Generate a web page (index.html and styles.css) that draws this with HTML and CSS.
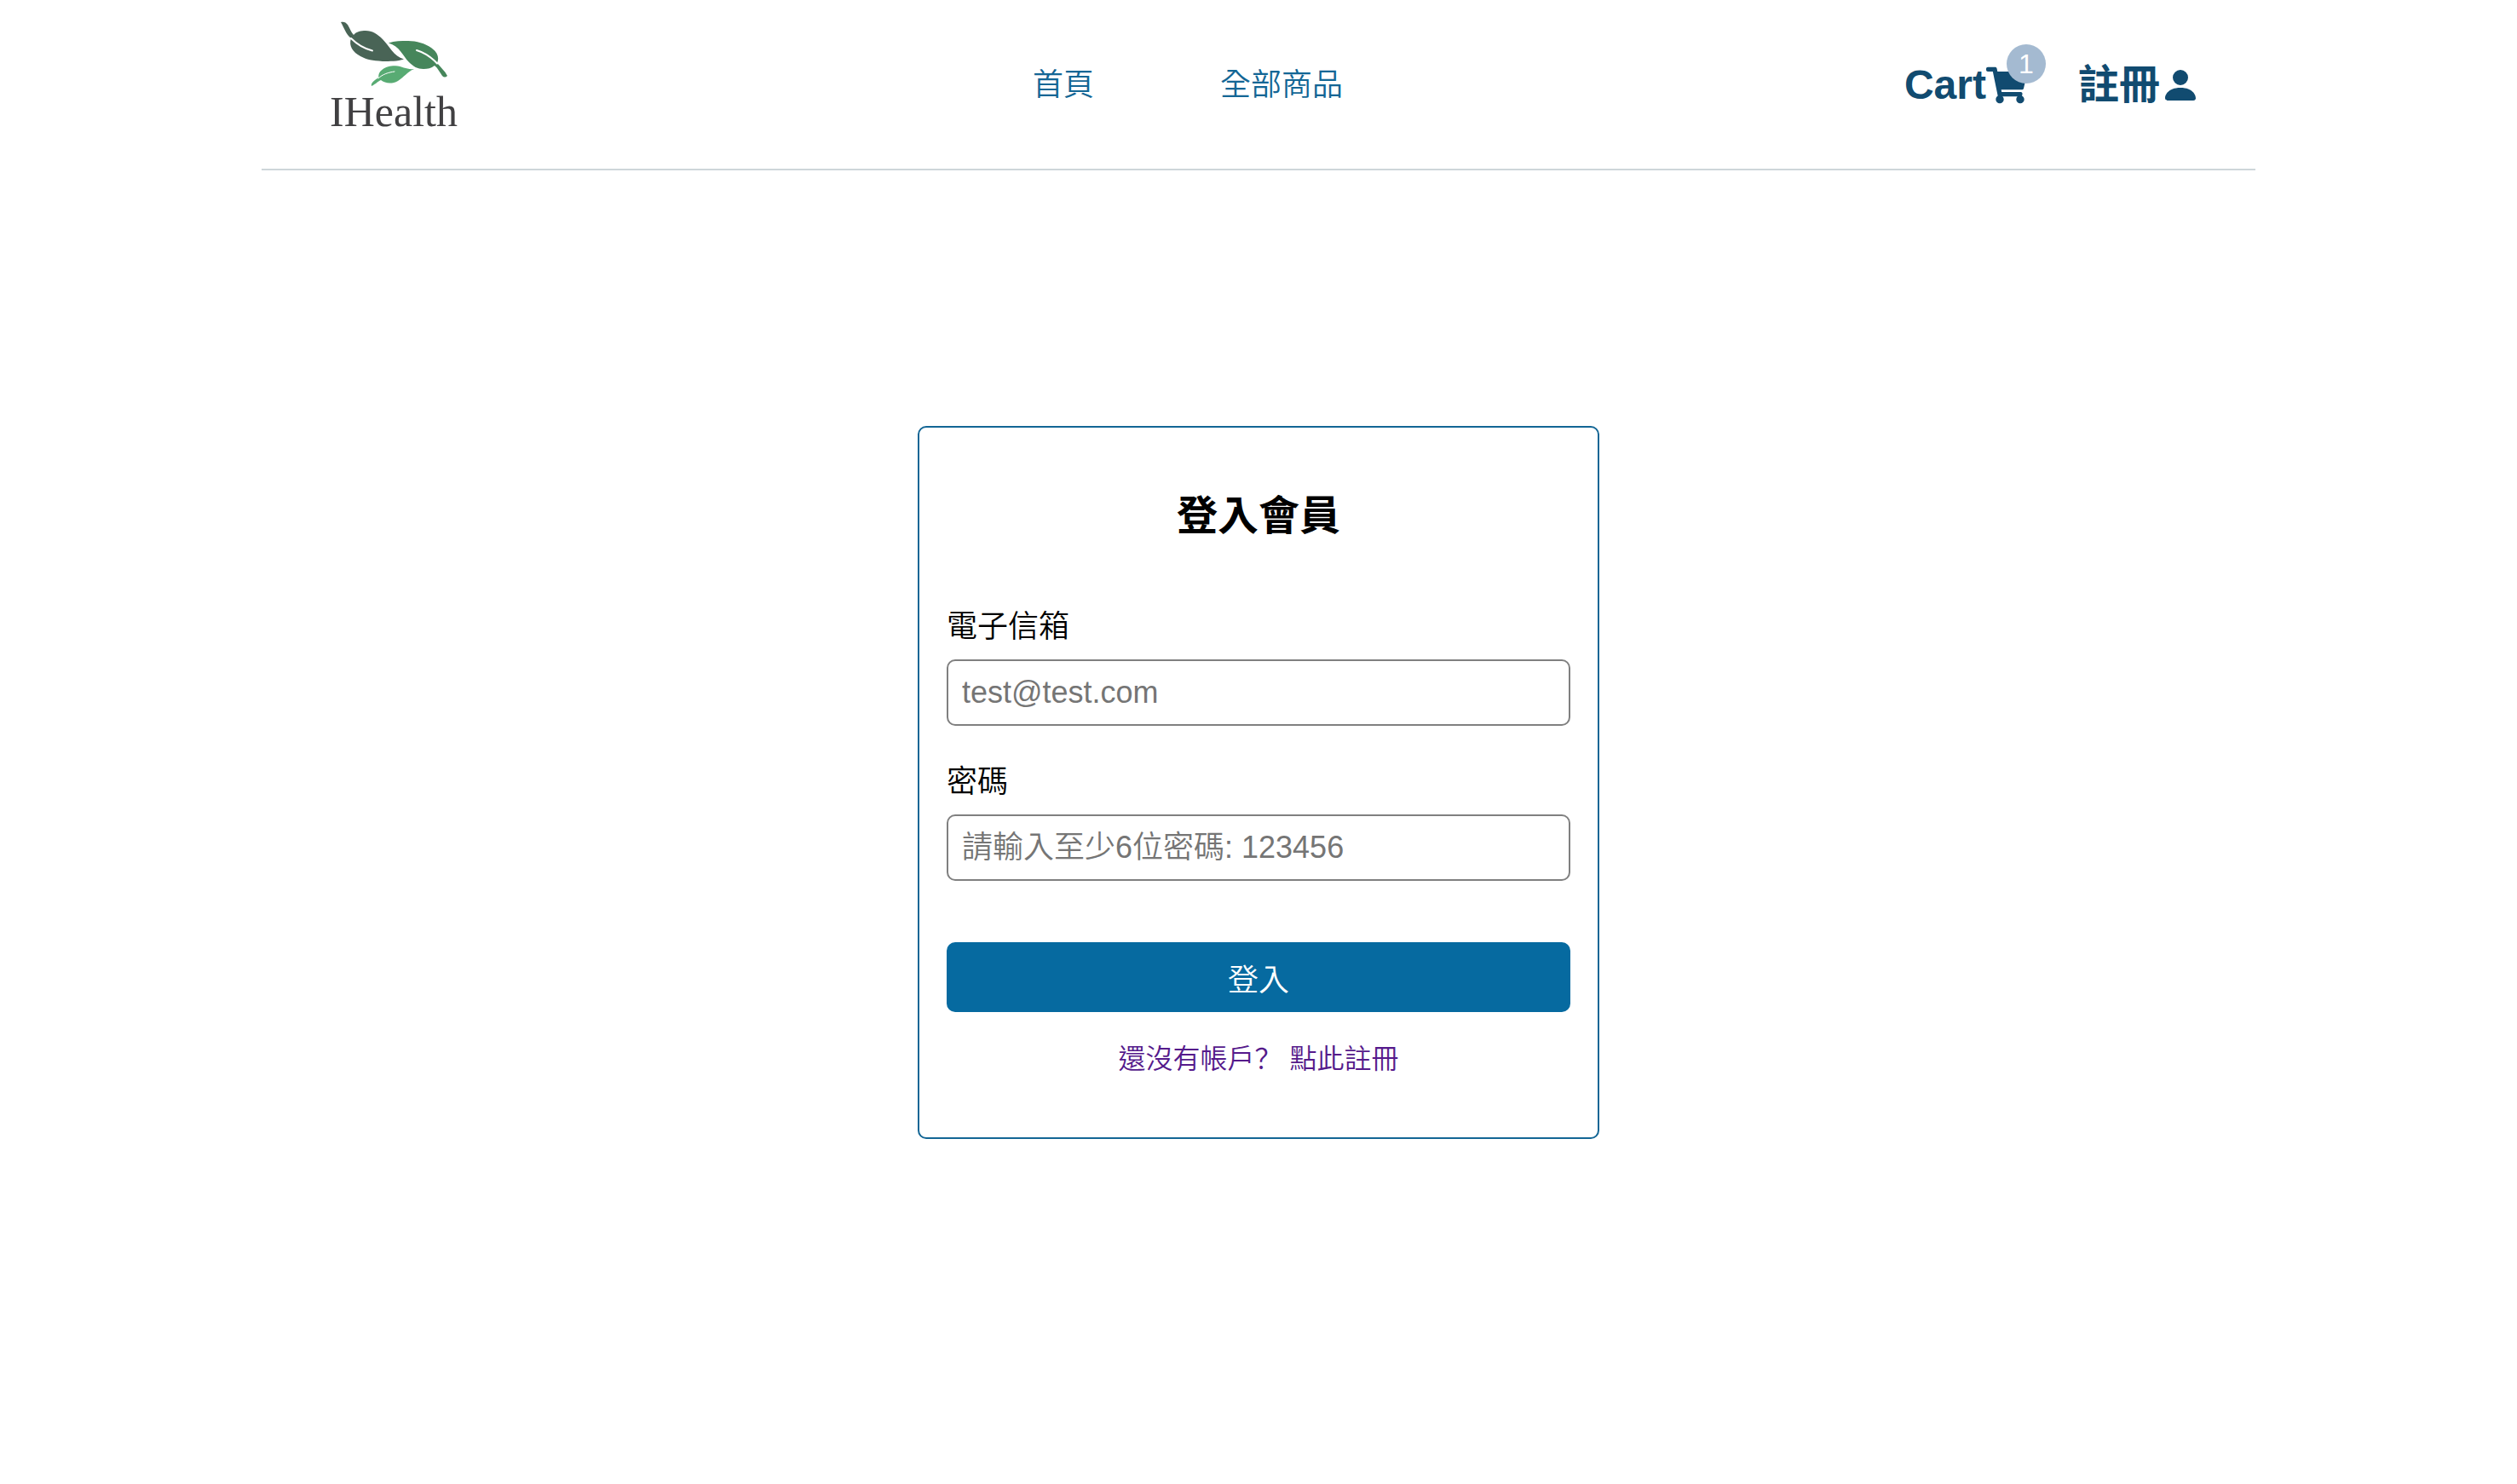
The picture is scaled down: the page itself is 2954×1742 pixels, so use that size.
FILE: index.html
```html
<!DOCTYPE html>
<html lang="zh-Hant">
<head>
<meta charset="utf-8">
<meta name="viewport" content="width=device-width, initial-scale=1">
<title>IHealth</title>
<link rel="stylesheet" href="styles.css">
</head>
<body>
<header class="header">
  <a class="logo" href="#" aria-label="IHealth">
    <svg class="logo-leaves" viewBox="0 0 160 84" aria-hidden="true">
      <path fill="#496456" d="M13 6C16 5 19 6 21 9C24 14 25 18 28 21C31 17 37 16 42 16C50 16 56 20 62 26C70 34 75 46 87 49.500C80 52 70 52 62 52C50 51 43 50 36 46C27 41 22 34 25 25C19 20 17 13 13 6Z"/>
      <path fill="#46865b" d="M69 30.500C76 28 84 28 92 28C102 28 112 31 119 36C126 41 129 47 126 54C130 59 135 63 138 69C136 71 134 71 132 69C129 65 127 60 123 57C119 60 115 61 110 61C103 61 98 58 93 53C86 46 82 34 69 30.500Z"/>
      <path fill="#58ab73" d="M99 61C91 64 87 71 80 75C73 79 65 78 60 74C56 76 52 80 49 81C48 78 52 74 57.500 71C56 63 66 57 77 57.300C86 58 90 62 99 61Z"/>
      <g fill="none" stroke="#fff" stroke-linecap="round">
        <path stroke-width="2" d="M25 25C32 32 40 37 50 39.500"/>
        <path stroke-width="2" d="M102 39C112 42 119 47 126 54.500"/>
        <path stroke-width="1" d="M57 72C62 67 69 65 76 64"/>
      </g>
    </svg>
    <span class="logo-name">IHealth</span>
  </a>
  <nav class="nav">
    <a href="#">首頁</a>
    <a href="#">全部商品</a>
  </nav>
  <div class="actions">
    <a class="action" href="#">Cart<svg class="action-icon" viewBox="0 0 576 512" aria-hidden="true"><path fill="currentColor" d="M528.120 301.319l47.273-208C578.806 78.301 567.391 64 551.990 64H159.208l-9.166-44.810C147.758 8.021 137.930 0 126.529 0H24C10.745 0 0 10.745 0 24v16c0 13.255 10.745 24 24 24h69.883l70.248 343.435C147.325 417.100 136 435.222 136 456c0 30.928 25.072 56 56 56s56-25.072 56-56c0-15.674-6.447-29.835-16.824-40h209.647C430.447 426.165 424 440.326 424 456c0 30.928 25.072 56 56 56s56-25.072 56-56c0-22.172-12.888-41.332-31.579-50.405l5.517-24.276c3.413-15.018-8.002-29.319-23.403-29.319H218.117l-6.545-32h293.145c11.206 0 20.920-7.754 23.403-18.681z"/></svg><span class="badge">1</span></a>
    <a class="action" href="#">註冊<svg class="action-icon" viewBox="0 0 16 16" aria-hidden="true"><path fill="currentColor" d="M3 14s-1 0-1-1 1-4 6-4 6 3 6 4-1 1-1 1H3zm5-6a3 3 0 1 0 0-6 3 3 0 0 0 0 6z"/></svg></a>
  </div>
</header>
<main class="main">
  <form class="card">
    <h1 class="title">登入會員</h1>
    <div class="field">
      <label for="email">電子信箱</label>
      <input id="email" type="email" placeholder="test@test.com">
    </div>
    <div class="field">
      <label for="password">密碼</label>
      <input id="password" type="password" placeholder="請輸入至少6位密碼: 123456">
    </div>
    <button class="submit" type="button">登入</button>
    <a class="signup" href="#">還沒有帳戶<span class="mark" lang="zh-Hans">？</span> 點此註冊</a>
  </form>
</main>
</body>
</html>
```
FILE: styles.css
```css
* {
  box-sizing: border-box;
}

body {
  margin: 0;
  background: #fff;
  color: #000;
  font-family: "Liberation Sans", "Noto Sans CJK TC", sans-serif;
  font-size: 36px;
  font-weight: 350;
}

a {
  text-decoration: none;
}

.header {
  display: flex;
  align-items: center;
  justify-content: space-between;
  max-width: 2340px;
  height: 200px;
  margin: 0 auto;
  padding: 2px 64px 0 80px;
  border-bottom: 2px solid #ced6da;
}

.logo {
  display: flex;
  flex-direction: column;
  width: 166px;
  padding-bottom: 22px;
  color: #414042;
}

.logo-leaves {
  width: 160px;
  height: 84px;
}

.logo-name {
  font-family: "Liberation Serif", serif;
  font-size: 50px;
  font-weight: 400;
  line-height: 54px;
}

.nav {
  display: flex;
  gap: 148px;
}

.nav a {
  color: #136695;
  line-height: 48px;
}

.actions {
  display: flex;
  gap: 60px;
}

.action {
  position: relative;
  display: flex;
  align-items: center;
  color: #114b70;
  font-size: 48px;
  font-weight: 700;
  line-height: 64px;
}

.action-icon {
  width: 48px;
  height: 48px;
}

.badge {
  position: absolute;
  top: -16px;
  right: -22px;
  width: 46px;
  height: 46px;
  border-radius: 50%;
  background: #a4bad1;
  color: #fff;
  font-size: 32px;
  font-weight: 350;
  line-height: 46px;
  text-align: center;
}

.main {
  display: flex;
  justify-content: center;
  padding: 300px 32px;
}

.card {
  display: flex;
  flex-direction: column;
  width: 100%;
  max-width: 800px;
  padding: 68px 32px;
  border: 2px solid #136695;
  border-radius: 10px;
}

.title {
  margin: 0 0 64px;
  font-size: 48px;
  font-weight: 700;
  line-height: 72px;
  text-align: center;
}

.field {
  display: flex;
  flex-direction: column;
  gap: 8px;
  margin-bottom: 36px;
}

.field label {
  line-height: 60px;
}

.field input {
  width: 100%;
  height: 78px;
  padding: 0 16px;
  border: 2px solid #808080;
  border-radius: 10px;
  background: #fff;
  font: inherit;
}

.field input::placeholder {
  color: #757575;
}

.submit {
  height: 82px;
  margin-top: 36px;
  padding: 0;
  border: 0;
  border-radius: 10px;
  background: #066aa0;
  color: #fff;
  font: inherit;
}

.signup {
  margin-top: 28px;
  color: #551a8b;
  font-size: 32px;
  line-height: 48px;
  text-align: center;
}

.mark {
  font-family: "Noto Sans CJK SC", sans-serif;
}
```
